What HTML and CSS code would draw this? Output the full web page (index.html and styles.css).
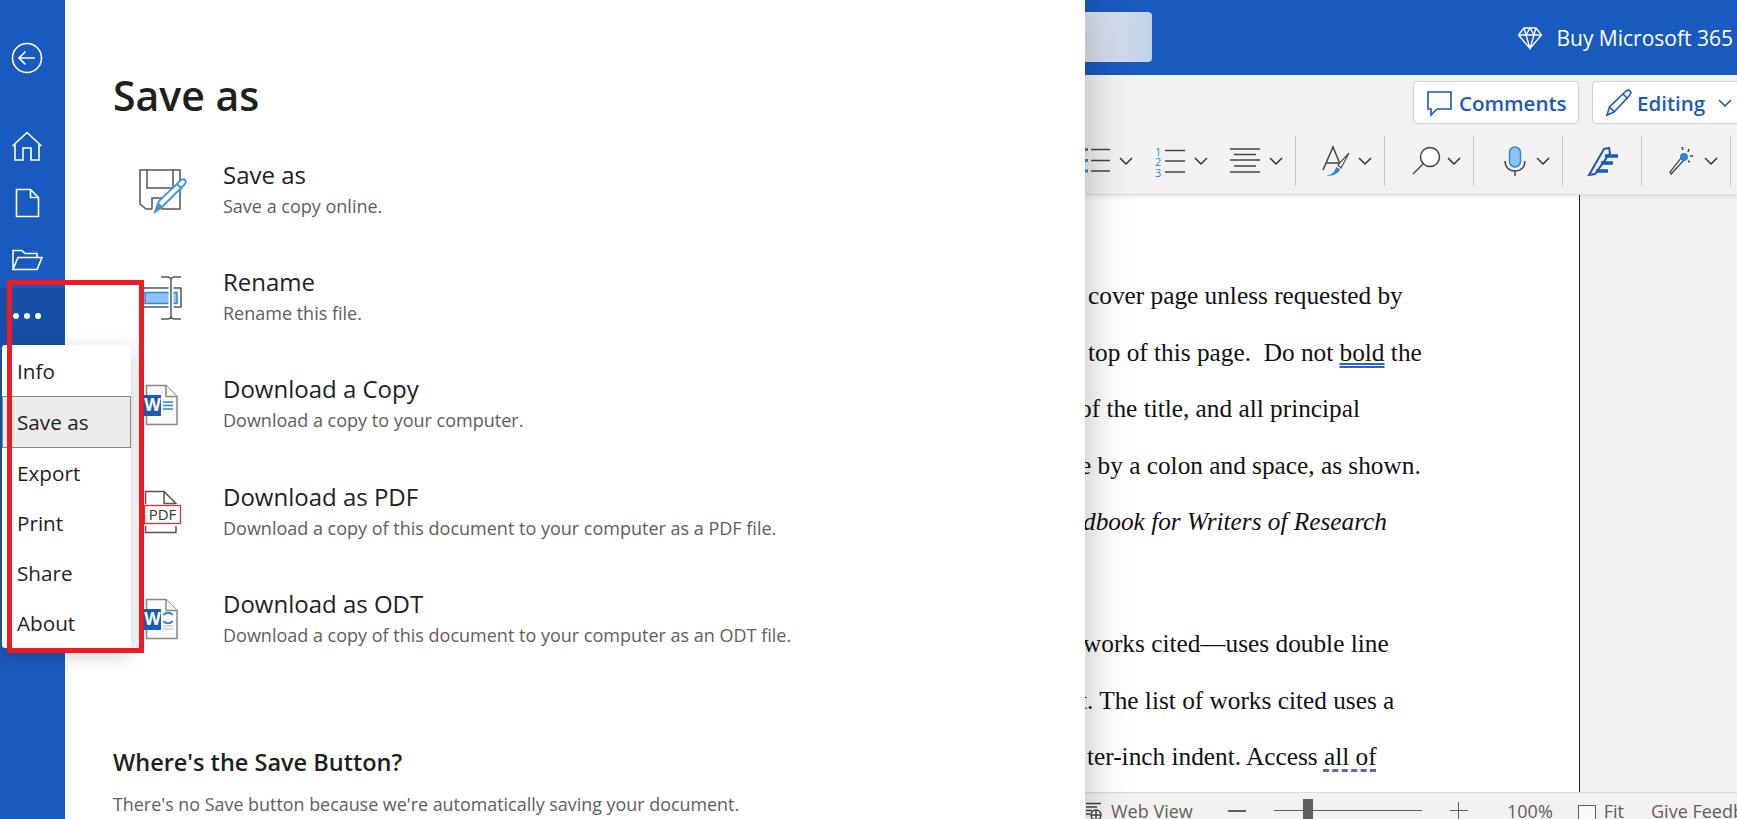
FILE: index.html
```html
<!DOCTYPE html>
<html lang="en">
<head>
    <meta charset="UTF-8">
    <meta name="viewport" content="width=device-width, initial-scale=1.0">
    <title>Save as</title>
    <link rel="stylesheet" href="styles.css">
</head>
<body>
    <div class="app">
        <!-- blue rail -->
        <nav class="rail">
            <div class="railItem railBack">
                <svg width="32" height="32" viewBox="0 0 32 32"><circle cx="16" cy="16" r="14.5"/><path d="M24 16H8M14.5 9.5L8 16l6.5 6.5"/></svg>
            </div>
            <div class="railItem">
                <svg width="32" height="32" viewBox="0 0 32 32"><path d="M1.5 15L16 1.5 30.5 15M4 13v16h8V17h8v12h8V13"/></svg>
            </div>
            <div class="railItem">
                <svg width="32" height="32" viewBox="0 0 32 32"><path d="M5.5 2.5h14l8 8v19h-22zM19.5 2.5v8h8"/></svg>
            </div>
            <div class="railItem">
                <svg width="32" height="32" viewBox="0 0 32 32"><path d="M2 25.5V6.500h9l3 3h12v4M2 25.500l5-12h24l-5 12z"/></svg>
            </div>
            <div class="railItem railMore">
                <span class="dot"></span><span class="dot"></span><span class="dot"></span>
            </div>
        </nav>

        <!-- save as panel -->
        <main class="panel">
            <h1 class="panelTitle">Save as</h1>
            <div class="saveList">
                <div class="saveRow">
                    <svg class="saveIcon" width="56" height="56" viewBox="0 0 56 56">
                        <path class="ln" d="M17 46H11l-6-5V7h40v39H26M12 7v18h26V7M17 46V35h13"/>
                        <path class="pen" d="M20 49l4-11 21-20c2-2 4-2 5-1s1 3-1 5L28 43z"/>
                        <path class="penTip" d="M19 50l4-11 5 5z"/>
                        <path class="pen" d="M42 21l5 5"/>
                    </svg>
                    <div>
                        <div class="saveName">Save as</div>
                        <div class="saveNote">Save a copy online.</div>
                    </div>
                </div>
                <div class="saveRow">
                    <svg class="saveIcon" width="56" height="56" viewBox="0 0 56 56">
                        <path class="ln" d="M8 18h38v19H8"/>
                        <rect x="10" y="22.500" width="32" height="11" fill="#8cc3f0" stroke="#2b88d8" stroke-width="1.500"/>
                        <path d="M36 7v42" stroke="#fff" stroke-width="5"/>
                        <path class="ln" d="M26 7h6c2 0 4 1 4 3v36c0 2-2 3-4 3h-6M46 7h-6c-2 0-4 1-4 3v36c0 2 2 3 4 3h6"/>
                    </svg>
                    <div>
                        <div class="saveName">Rename</div>
                        <div class="saveNote">Rename this file.</div>
                    </div>
                </div>
                <div class="saveRow">
                    <svg class="saveIcon" width="56" height="56" viewBox="0 0 56 56">
                        <path class="page" d="M11.500 8.500H31l11 11v28H11.500z"/>
                        <path class="page" d="M31 8.500v11h11"/>
                        <rect x="9" y="18" width="17" height="21" fill="#185abd"/>
                        <text class="tileW" x="17.500" y="34">W</text>
                        <path d="M28 25h10M28 28.500h10M28 32h10" stroke="#2b88d8" stroke-width="1.500"/>
                    </svg>
                    <div>
                        <div class="saveName">Download a Copy</div>
                        <div class="saveNote">Download a copy to your computer.</div>
                    </div>
                </div>
                <div class="saveRow">
                    <svg class="saveIcon" width="56" height="56" viewBox="0 0 56 56">
                        <path class="ln" d="M10.500 20V7.500H29l12 12V20M10.500 42v6.500h30.500V42M29 7.500v12h12"/>
                        <rect x="9.500" y="21.500" width="36" height="18" fill="#fff" stroke="#d13438" stroke-width="1.300"/>
                        <text class="tilePdf" x="27.500" y="36">PDF</text>
                    </svg>
                    <div>
                        <div class="saveName">Download as PDF</div>
                        <div class="saveNote">Download a copy of this document to your computer as a PDF file.</div>
                    </div>
                </div>
                <div class="saveRow">
                    <svg class="saveIcon" width="56" height="56" viewBox="0 0 56 56">
                        <path class="page" d="M11.500 8.500H31l11 11v28H11.500z"/>
                        <path class="page" d="M31 8.500v11h11"/>
                        <rect x="9" y="18" width="17" height="21" fill="#185abd"/>
                        <text class="tileW" x="17.500" y="34">W</text>
                        <path d="M28.500 24a5 4 0 0 1 9 0M37.500 30a5 4 0 0 1-9 0" fill="none" stroke="#2b88d8" stroke-width="2"/>
                        <path d="M28 35h10M28 38h10" stroke="#bbb" stroke-width="1"/>
                    </svg>
                    <div>
                        <div class="saveName">Download as ODT</div>
                        <div class="saveNote">Download a copy of this document to your computer as an ODT file.</div>
                    </div>
                </div>
            </div>
            <h2 class="helpTitle">Where's the Save Button?</h2>
            <p class="helpText">There's no Save button because we're automatically saving your document.</p>
        </main>

        <!-- word window behind the panel -->
        <section class="word">
            <header class="topBar">
                <div class="searchBox"></div>
                <div class="buy">
                    <svg width="26" height="24" viewBox="0 0 26 24"><path d="M7 2h12l5.500 7L13 22.500 1.500 9zM1.500 9h23M9 9l4 13.500L17 9M7 2l2 7 4-7 4 7 2-7"/></svg>
                    <span>Buy Microsoft 365</span>
                </div>
            </header>
            <div class="ribbon">
                <div class="actions">
                    <div class="actionBtn">
                        <svg width="30" height="30" viewBox="0 0 30 30"><path d="M4 4h23v17H13l-6 6v-6H4z"/></svg>
                        <span>Comments</span>
                    </div>
                    <div class="actionBtn actionEdit">
                        <svg width="30" height="30" viewBox="0 0 30 30"><path d="M3 27l2.500-8L21 4c2-2 4-2 5-1s1 3-1 5L10 24zM19 6l5 5M5.500 19l5 5"/></svg>
                        <span>Editing</span>
                        <svg class="chev" width="14" height="8" viewBox="0 0 14 8"><path d="M1 1l6 6 6-6"/></svg>
                    </div>
                </div>
                <div class="tools">
                    <div class="toolGroup toolGroupFirst">
                        <div class="tool">
                            <svg class="toolCut" width="28" height="30" viewBox="0 0 28 30"><path class="bar" d="M6 3.500h19M6 14.500h19M6 25h19"/><path class="blueBar" d="M0 3.500h3M0 14.500h3M0 25h3"/></svg>
                            <svg class="chev" width="14" height="8" viewBox="0 0 14 8"><path d="M1 1l6 6 6-6"/></svg>
                        </div>
                        <div class="tool">
                            <svg width="30" height="30" viewBox="0 0 30 30"><text class="num" x="-3" y="10">1</text><text class="num" x="-3" y="20">2</text><text class="num" x="-3" y="31">3</text><path class="bar" d="M7 4.500h20M7 15h20M7 26h20"/></svg>
                            <svg class="chev" width="14" height="8" viewBox="0 0 14 8"><path d="M1 1l6 6 6-6"/></svg>
                        </div>
                        <div class="tool">
                            <svg width="30" height="30" viewBox="0 0 30 30"><path class="bar" d="M-3 3h30M1 8.500h22M-3 14h30M1 20h22M-3 26h30"/></svg>
                            <svg class="chev" width="14" height="8" viewBox="0 0 14 8"><path d="M1 1l6 6 6-6"/></svg>
                        </div>
                    </div>
                    <div class="toolGroup">
                        <div class="tool">
                            <svg width="30" height="30" viewBox="0 0 30 30"><path class="bar" d="M1 24L11 1l7 17M4 17h13"/><path class="brush" d="M27 7L16 19l3 3z"/><path class="brushTip" d="M3 29c5 1 10-2 11-8l4 2c-1 5-9 8-15 6z"/></svg>
                            <svg class="chev" width="14" height="8" viewBox="0 0 14 8"><path d="M1 1l6 6 6-6"/></svg>
                        </div>
                    </div>
                    <div class="toolGroup">
                        <div class="tool">
                            <svg width="30" height="30" viewBox="0 0 30 30"><circle class="lens" cx="19" cy="11" r="9.500"/><path class="bar" d="M12 18L2 28"/></svg>
                            <svg class="chev" width="14" height="8" viewBox="0 0 14 8"><path d="M1 1l6 6 6-6"/></svg>
                        </div>
                    </div>
                    <div class="toolGroup">
                        <div class="tool">
                            <svg width="30" height="30" viewBox="0 0 30 30"><rect x="9.500" y="1" width="11" height="20" rx="5.500" fill="#8cc3f0" stroke="#2b88d8" stroke-width="1.500"/><path class="bar" d="M5 15c0 6 4 10 10 10s10-4 10-10M15 25v5"/></svg>
                            <svg class="chev" width="14" height="8" viewBox="0 0 14 8"><path d="M1 1l6 6 6-6"/></svg>
                        </div>
                    </div>
                    <div class="toolGroup toolGroupSolo">
                        <svg width="30" height="30" viewBox="0 0 30 30"><path class="editorPen" d="M1 29L16 3l5-1 1 5-15 21z"/><path class="editor" d="M17 10h13M13 17h12M8 25h12"/></svg>
                    </div>
                    <div class="toolGroup">
                        <div class="tool">
                            <svg width="30" height="30" viewBox="0 0 30 30"><path class="wand" d="M3 28l-1-2L13 12l3 2z"/><circle cx="16" cy="11" r="4" fill="#2b88d8"/><path class="bar" d="M14 1l1 3M21 3l-1 3M25 10h-3M22 16l-2-1"/></svg>
                            <svg class="chev" width="14" height="8" viewBox="0 0 14 8"><path d="M1 1l6 6 6-6"/></svg>
                        </div>
                    </div>
                </div>
            </div>
            <div class="docArea">
                <div class="docPage">
                    <div class="para">
                        <div class="line in3">cover page unless requested by</div>
                        <div class="line in3">top of this page.&nbsp; Do not <span class="spell">bold</span> the</div>
                        <div class="line out6">of the title, and all principal</div>
                        <div class="line out5">e by a colon and space, as shown.</div>
                        <div class="line out2 lineItalic">dbook for Writers of Research</div>
                    </div>
                    <div class="para">
                        <div class="line out2">works cited—uses double line</div>
                        <div class="line out5">t. The list of works cited uses a</div>
                        <div class="line in2">ter-inch indent. Access <span class="grammar">all of</span></div>
                    </div>
                </div>
                <div class="docSide"></div>
            </div>
            <footer class="statusBar">
                <div class="statusView">
                    <svg width="18" height="18" viewBox="0 0 18 18"><path class="bar" d="M1 1.500h15M1 5h11M1 8.500h6M1 12h4"/><circle cx="11" cy="13" r="5" fill="#fff" stroke="#444" stroke-width="1.500"/><path class="bar" d="M6 13h10M11 8v10"/></svg>
                    <span>Web View</span>
                </div>
                <div class="zoomMinus"></div>
                <div class="zoomTrack"><div class="zoomThumb"></div></div>
                <div class="zoomPlus"></div>
                <span class="zoomValue">100%</span>
                <div class="fitBox"></div>
                <span class="fitLabel">Fit</span>
                <span class="feedback">Give Feedback to Microsoft</span>
            </footer>
        </section>

        <!-- menu popup and the red highlight drawn on top -->
        <div class="moreMenu">
            <div class="menuItem">Info</div>
            <div class="menuItem menuActive">Save as</div>
            <div class="menuItem">Export</div>
            <div class="menuItem">Print</div>
            <div class="menuItem">Share</div>
            <div class="menuItem">About</div>
        </div>
        <div class="redBox"></div>
    </div>
</body>
</html>
```

FILE: styles.css
```css
html, body {
    margin: 0;
    height: 100%;
    overflow: hidden;
}
body {
    font-family: "Open Sans", "Noto Sans", sans-serif;
    color: #201f1e;
}
.app {
    position: relative;
    display: grid;
    grid-template-columns: 65px 1020px 1fr;
    height: 100vh;
    overflow: hidden;
}

/* rail */
.rail {
    background-color: #185abd;
    padding-top: 30px;
    z-index: 3;
}
.railItem {
    height: 56.5px;
    display: flex;
    align-items: center;
    justify-content: center;
    padding-right: 12px;
    box-sizing: border-box;
}
.railItem svg {
    fill: none;
    stroke: #fff;
    stroke-width: 1.6;
}
.railBack {
    margin-bottom: 32px;
}
.railMore {
    background-color: #174ea6;
    gap: 5px;
}
.dot {
    width: 6px;
    height: 6px;
    border-radius: 50%;
    background-color: #fff;
}

/* save as panel */
.panel {
    background-color: #fff;
    padding: 65px 0 0 48px;
    box-shadow: 0 0 40px rgba(0, 0, 0, 0.28);
    z-index: 2;
    overflow: hidden;
}
.panelTitle {
    margin: 0;
    font-size: 41px;
    line-height: 60px;
    font-weight: 600;
}
.saveList {
    margin-top: 10px;
}
.saveRow {
    display: flex;
    align-items: center;
    height: 107.2px;
}
.saveIcon {
    margin: 4px 32px 0 22px;
    flex: none;
}
.saveIcon .ln {
    fill: none;
    stroke: #555;
    stroke-width: 1.500;
}
.saveIcon .page {
    fill: #fafafa;
    stroke: #8a8886;
    stroke-width: 1.500;
}
.saveIcon .pen {
    fill: #fff;
    stroke: #3a96dd;
    stroke-width: 1.800;
}
.saveIcon .penTip {
    fill: #3a96dd;
}
.tileW {
    font: 700 17px "Open Sans", sans-serif;
    fill: #fff;
    text-anchor: middle;
}
.tilePdf {
    font: 400 15px "Open Sans", sans-serif;
    fill: #333;
    text-anchor: middle;
}
.saveName {
    font-size: 24px;
    line-height: 32px;
}
.saveNote {
    font-size: 18px;
    line-height: 24px;
    color: #605e5c;
    margin-top: 3px;
}
.helpTitle {
    margin: 75px 0 0;
    font-size: 23.500px;
    line-height: 32px;
    font-weight: 600;
}
.helpText {
    margin: 14px 0 0;
    font-size: 17.900px;
    line-height: 24px;
    color: #605e5c;
    white-space: nowrap;
}

/* word window */
.word {
    display: flex;
    flex-direction: column;
    min-width: 0;
    overflow: hidden;
}
.topBar {
    display: flex;
    align-items: center;
    justify-content: space-between;
    height: 75px;
    flex: none;
    background-color: #185abd;
    color: #fff;
    padding-right: 4px;
}
.searchBox {
    width: 67px;
    height: 50px;
    margin-bottom: 1px;
    border-radius: 0 4px 4px 0;
    background: linear-gradient(90deg, #dde3ee, #c3d2e7);
}
.buy {
    display: flex;
    align-items: center;
    gap: 13px;
    font-size: 21px;
    white-space: nowrap;
}
.buy svg {
    fill: none;
    stroke: #fff;
    stroke-width: 1.400;
}
.ribbon {
    height: 120px;
    flex: none;
    box-sizing: border-box;
    background-color: #f3f2f1;
    border-bottom: 1px solid #dcdad8;
    box-shadow: 0 2px 4px rgba(0, 0, 0, 0.08);
    z-index: 1;
}
.actions {
    display: flex;
    gap: 13px;
    padding: 6px 0 0 328px;
    height: 43px;
}
.actionBtn {
    display: flex;
    align-items: center;
    gap: 5px;
    width: 166px;
    flex: none;
    box-sizing: border-box;
    padding-left: 10px;
    background-color: #fff;
    border: 1px solid #d2d0ce;
    border-radius: 4px;
    color: #185abd;
    font-size: 20.500px;
    font-weight: 600;
}
.actionBtn svg {
    fill: none;
    stroke: #185abd;
    stroke-width: 1.600;
}
.actionEdit {
    gap: 3px;
    padding-left: 11px;
}
.actionEdit .chev {
    margin-left: 10px;
}
.chev {
    flex: none;
    fill: none;
    stroke: #323130;
    stroke-width: 1.500;
}
.tools {
    display: flex;
    height: 50px;
    margin-top: 12px;
}
.toolGroup {
    display: flex;
    align-items: center;
    padding: 0 12px 0 26px;
    border-right: 1px solid #c8c6c4;
}
.toolGroupFirst {
    padding-left: 0;
    gap: 25px;
}
.toolGroupSolo {
    padding: 0 23px 0 25px;
}
.tool {
    display: flex;
    align-items: center;
    gap: 6px;
}
.tools svg {
    overflow: visible;
}
.bar {
    fill: none;
    stroke: #444;
    stroke-width: 1.500;
}
.blueBar {
    fill: none;
    stroke: #2b88d8;
    stroke-width: 3;
}
.num {
    font: 400 11px "Open Sans", sans-serif;
    fill: #2b88d8;
}
.lens {
    fill: #fff;
    stroke: #444;
    stroke-width: 1.500;
}
.brush {
    fill: #fff;
    stroke: #555;
    stroke-width: 1.300;
}
.brushTip {
    fill: #2b88d8;
}
.editorPen {
    fill: none;
    stroke: #185abd;
    stroke-width: 2;
}
.editor {
    fill: none;
    stroke: #185abd;
    stroke-width: 3.500;
}
.wand {
    fill: #fff;
    stroke: #444;
    stroke-width: 1.300;
}

/* document */
.docArea {
    flex: 1;
    display: flex;
    min-height: 0;
}
.docPage {
    width: 495px;
    flex: none;
    box-sizing: border-box;
    padding-top: 72px;
    background-color: #fff;
    border-right: 1px solid #201f1e;
    overflow: hidden;
    font-family: "Liberation Serif", serif;
    font-size: 25.300px;
    color: #111;
}
.docSide {
    flex: 1;
    background-color: #f3f2f1;
}
.para {
    margin-bottom: 65.500px;
}
.line {
    height: 56.500px;
    line-height: 56.500px;
    white-space: nowrap;
}
.lineItalic {
    font-style: italic;
}
.in2 { margin-left: 2px; }
.in3 { margin-left: 3px; }
.out2 { margin-left: -2px; }
.out5 { margin-left: -5px; }
.out6 { margin-left: -6px; }
.spell {
    text-decoration: underline double #2b5fd9;
    text-underline-offset: 2px;
}
.grammar {
    text-decoration: underline dashed #6a5acd 2.500px;
    text-underline-offset: 4px;
}

/* status bar */
.statusBar {
    display: flex;
    align-items: center;
    height: 27px;
    flex: none;
    box-sizing: border-box;
    padding-top: 9px;
    background-color: #f3f2f1;
    border-top: 1px solid #dcdad8;
    color: #605e5c;
    font-size: 18px;
    line-height: 24px;
    white-space: nowrap;
}
.statusView {
    display: flex;
    align-items: center;
    gap: 8px;
    width: 143px;
    flex: none;
}
.zoomMinus {
    width: 18px;
    height: 2px;
    background-color: #605e5c;
    flex: none;
}
.zoomTrack {
    position: relative;
    width: 148px;
    height: 1px;
    margin-left: 28px;
    background-color: #605e5c;
    flex: none;
}
.zoomThumb {
    position: absolute;
    left: 29px;
    top: -11px;
    width: 10px;
    height: 24px;
    background-color: #605e5c;
}
.zoomPlus {
    position: relative;
    width: 18px;
    height: 1px;
    margin-left: 28px;
    background-color: #605e5c;
    flex: none;
}
.zoomPlus::after {
    content: "";
    position: absolute;
    left: 8px;
    top: -8px;
    width: 1px;
    height: 18px;
    background-color: #605e5c;
}
.zoomValue {
    margin-left: 39px;
}
.fitBox {
    width: 18px;
    height: 24px;
    margin: 12px 0 0 25px;
    box-sizing: border-box;
    border: 1px solid #605e5c;
    background-color: #faf9f8;
    flex: none;
}
.fitLabel {
    margin-left: 8px;
}
.feedback {
    margin-left: 27px;
}

/* popup menu */
.moreMenu {
    position: absolute;
    left: 2px;
    top: 345px;
    width: 129px;
    height: 303px;
    box-sizing: border-box;
    display: flex;
    flex-direction: column;
    padding: 1px 0 0;
    background-color: #fff;
    border-radius: 3px;
    box-shadow: 0 6px 20px rgba(0, 0, 0, 0.22);
    z-index: 4;
}
.menuItem {
    flex: 1;
    display: flex;
    align-items: center;
    box-sizing: border-box;
    padding-left: 15px;
    font-size: 20.700px;
}
.menuActive {
    background-color: #edebe9;
    border: 1px solid #8a8886;
    padding-left: 14px;
}
.redBox {
    position: absolute;
    left: 7px;
    top: 280px;
    width: 137px;
    height: 373px;
    box-sizing: border-box;
    border: 5px solid #ed1c24;
    z-index: 5;
}
```
